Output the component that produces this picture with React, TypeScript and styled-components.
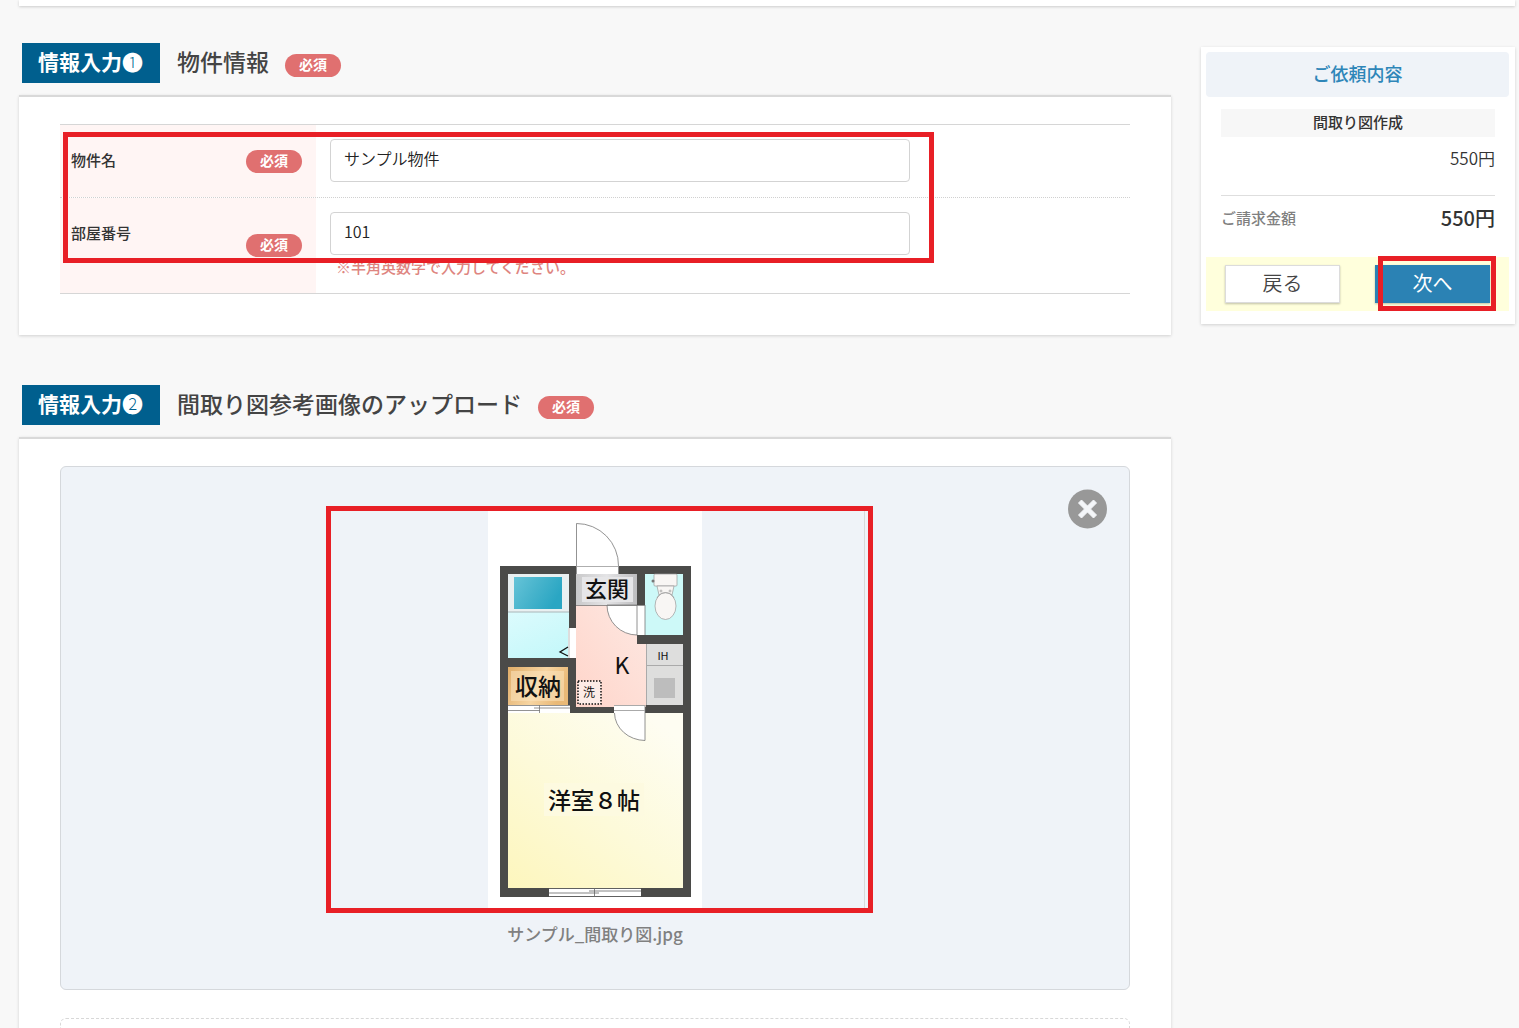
import React from "react";
import styled, { createGlobalStyle } from "styled-components";

const GlobalStyle = createGlobalStyle`
  *, *::before, *::after { box-sizing: border-box; }
  body {
    margin: 0;
    background: #f8f8f8;
    color: #333;
    font-family: "Noto Sans CJK JP", "Noto Sans", sans-serif;
    font-size: 15px;
  }
  h2, h3, p, dl, dt, dd, figure { margin: 0; }
  button, input { font-family: inherit; }
`;

const Page = styled.div`
  height: 100vh;
  overflow: hidden;
  padding: 0 4px 0 19px;
`;

const TopPanel = styled.div`
  height: 6px;
  background: #fff;
  box-shadow: 0 1px 3px rgba(0, 0, 0, 0.18);
`;

const Columns = styled.div`
  display: flex;
  align-items: flex-start;
  gap: 30px;
`;

const Main = styled.main`
  flex: 1;
  min-width: 0;
  padding-top: 37px;
`;

const Section = styled.section`
  margin-bottom: 50px;
`;

const SectionHeader = styled.header`
  display: flex;
  align-items: center;
  height: 40px;
  margin: 0 0 12px 3px;
`;

const Step = styled.span`
  height: 40px;
  padding: 0 17px 0 16px;
  background: #005f8e;
  color: #fff;
  font-size: 21px;
  font-weight: 700;
  line-height: 36px;
`;

const StepNumber = styled.span`
  font-weight: 300;
`;

const SectionTitle = styled.h2`
  height: 40px;
  margin: 0 16px 0 17px;
  color: #444;
  font-size: 23px;
  font-weight: 500;
  line-height: 36px;
`;

const Required = styled.span<{ $lowered?: boolean }>`
  flex: none;
  width: 56px;
  height: 23px;
  margin-top: ${(p) => (p.$lowered ? 4 : 0)}px;
  border-radius: 12px;
  background: #e07070;
  color: #fff;
  font-size: 14px;
  font-weight: 700;
  line-height: 20px;
  text-align: center;
`;

const Card = styled.div`
  padding: 27px 41px 41px;
  border-top: 2px solid #d9d9d9;
  background: #fff;
  box-shadow: 0 1px 3px rgba(0, 0, 0, 0.16);
`;

const Fields = styled.div`
  position: relative;
  border-top: 1px solid #d6d6d6;
  border-bottom: 1px solid #d6d6d6;
`;

const FieldRow = styled.div`
  display: grid;
  grid-template-columns: 256px 1fr;

  & + & {
    border-top: 1px dotted #d0d0d0;
  }
`;

const FieldHead = styled.div`
  display: flex;
  align-items: center;
  justify-content: space-between;
  padding: 0 14px 0 11px;
  background: #fff5f4;
`;

const FieldLabel = styled.label`
  align-self: flex-start;
  padding-top: 23px;
  color: #333;
  font-weight: 500;
  line-height: 24px;
`;

const FieldBody = styled.div`
  padding: 14px 14px 15px;
`;

const TextInput = styled.input`
  display: block;
  width: 580px;
  max-width: 100%;
  height: 43px;
  padding: 0 13px 5px;
  border: 1px solid #d3d3d3;
  border-radius: 4px;
  background: #fff;
  color: #222;
  font-size: 16px;
  font-weight: 350;
`;

const Hint = styled.p`
  margin: 2px 0 1px 6px;
  color: #de8580;
  font-weight: 500;
  line-height: 20px;
`;

const Highlight = styled.div<{ $top: number; $left: number; $w: number; $h: number }>`
  position: absolute;
  top: ${(p) => p.$top}px;
  left: ${(p) => p.$left}px;
  width: ${(p) => p.$w}px;
  height: ${(p) => p.$h}px;
  border: 5px solid #e81f26;
  pointer-events: none;
`;

const UploadBox = styled.div`
  position: relative;
  padding: 44px 0 43px;
  border: 1px solid #d5d8dc;
  border-radius: 6px;
  background: #eff3f8;
`;

const RemoveButton = styled.button`
  position: absolute;
  top: 22px;
  right: 22px;
  width: 40px;
  height: 40px;
  padding: 0;
  border: 0;
  background: none;
  cursor: pointer;

  svg { display: block; }
`;

const Preview = styled.div`
  position: relative;
  display: flex;
  justify-content: center;
  width: 540px;
  margin: 0 auto;
  border-right: 1px solid #d9d9d9;

  svg { display: block; }
`;

const FileName = styled.figcaption`
  margin-top: 14px;
  color: #808080;
  font-size: 17px;
  font-weight: 500;
  line-height: 24px;
  text-align: center;
`;

const DropArea = styled.div`
  height: 160px;
  margin-top: 28px;
  border: 1px dashed #d8d8d8;
  border-radius: 6px;
`;

const Side = styled.aside`
  flex: none;
  width: 314px;
  margin-top: 41px;
  padding: 5px 6px 13px 5px;
  background: #fff;
  box-shadow: 0 1px 3px rgba(0, 0, 0, 0.16);
`;

const SideTitle = styled.h2`
  border-radius: 4px;
  background: #eff3f8;
  color: #2e86b8;
  font-size: 18px;
  font-weight: 500;
  line-height: 42px;
  height: 45px;
  text-align: center;
`;

const Summary = styled.div`
  padding: 12px 14px 24px 15px;
`;

const ItemName = styled.h3`
  height: 28px;
  background: #f7f7f7;
  font-size: 15px;
  font-weight: 500;
  line-height: 26px;
  text-align: center;
`;

const ItemPrice = styled.p`
  padding: 7px 0 23px;
  border-bottom: 1px solid #dedede;
  font-size: 17px;
  font-weight: 350;
  line-height: 28px;
  text-align: right;
`;

const Total = styled.dl`
  display: flex;
  align-items: center;
  justify-content: space-between;
  padding: 8px 0 1px;
  line-height: 28px;

  dt { color: #808080; font-weight: 500; }
  dd { font-size: 20px; font-weight: 500; }
`;

const Actions = styled.div`
  position: relative;
  display: flex;
  justify-content: space-between;
  padding: 8px 19px;
  background: #ffffdc;
`;

const ActionButton = styled.button<{ $primary?: boolean }>`
  width: 115px;
  height: 38px;
  padding: 0 0 2px;
  border: 1px solid ${(p) => (p.$primary ? "#2b82b4" : "#dcdcdc")};
  background: ${(p) => (p.$primary ? "#2b82b4" : "#fff")};
  box-shadow: 0 1px 2px rgba(0, 0, 0, 0.25);
  color: ${(p) => (p.$primary ? "#fff" : "#444")};
  font-size: 20px;
  font-weight: ${(p) => (p.$primary ? 400 : 350)};
  line-height: 32px;
  cursor: pointer;
`;

const PlanText = styled.text`
  fill: #111;
  font-family: "Noto Sans CJK JP", sans-serif;
  text-anchor: middle;
`;

function FloorPlan() {
  const wall = "#4b4b49";
  return (
    <svg width="214" height="397" viewBox="8 11 214 397" role="img" aria-label="間取り図">
      <defs>
        <linearGradient id="tub" x1="0" y1="0" x2="1" y2="0.4">
          <stop offset="0" stopColor="#66c4d8" />
          <stop offset="0.5" stopColor="#48b4cc" />
          <stop offset="1" stopColor="#2aa6c3" />
        </linearGradient>
        <linearGradient id="bath" x1="0" y1="0" x2="0.6" y2="1">
          <stop offset="0" stopColor="#dcfbfd" />
          <stop offset="1" stopColor="#c6f8fa" />
        </linearGradient>
        <linearGradient id="closet" x1="0" y1="0" x2="1" y2="0.3">
          <stop offset="0" stopColor="#e0ad69" />
          <stop offset="0.6" stopColor="#f7d5a2" />
          <stop offset="1" stopColor="#e9b977" />
        </linearGradient>
        <linearGradient id="hall" x1="0" y1="0" x2="1" y2="0">
          <stop offset="0" stopColor="#c9c9ca" />
          <stop offset="0.5" stopColor="#e4e4e6" />
          <stop offset="1" stopColor="#bdbdbf" />
        </linearGradient>
        <linearGradient id="kitchen" x1="0" y1="1" x2="1" y2="0">
          <stop offset="0" stopColor="#ffd5ca" />
          <stop offset="1" stopColor="#fde8e2" />
        </linearGradient>
        <linearGradient id="room" x1="0" y1="1" x2="0.8" y2="0">
          <stop offset="0" stopColor="#fdf6bd" />
          <stop offset="0.5" stopColor="#fdfad9" />
          <stop offset="1" stopColor="#fefdf2" />
        </linearGradient>
      </defs>
      <rect x="8" y="11" width="214" height="397" fill="#fff" />
      <rect x="20" y="66" width="191" height="331" fill={wall} />

      <rect x="28" y="74" width="61" height="38" fill="#e9f0f1" />
      <rect x="34" y="77" width="48" height="32" fill="url(#tub)" />
      <rect x="28" y="112" width="61" height="46" fill="url(#bath)" />
      <path d="M28 112H89" stroke="#a9b6b8" />
      <rect x="88" y="128" width="8" height="30" fill="#fff" />
      <path d="M89 128V158" stroke="#bbb" />

      <rect x="28" y="167" width="60" height="38" fill="url(#closet)" />
      <rect x="31" y="171" width="53" height="30" fill="#fbe3bd" opacity="0.55" />
      <rect x="28" y="205" width="62" height="8" fill="#fff" />
      <path d="M28 205.500H90M28 210.500H60M54 208H90M59.500 205V213" stroke="#777" strokeWidth="0.8" />

      <rect x="96" y="66" width="43" height="8" fill="#fff" />
      <path d="M96.500 74V23.500A42 42 0 0 1 138.500 66V74" fill="#fff" stroke="#777" strokeWidth="0.8" />
      <path d="M96 66.500H139" stroke="#999" strokeWidth="0.8" />
      <rect x="96" y="74" width="61" height="31" fill="url(#hall)" />
      <rect x="102" y="77" width="51" height="25" fill="#e6e6e8" />

      <rect x="96" y="105" width="70" height="102" fill="url(#kitchen)" />
      <rect x="165" y="74" width="38" height="61" fill="#cdf9f8" />
      <rect x="157" y="105" width="8" height="30" fill="#fff" />
      <path d="M127 105A30 30 0 0 0 157 135V105Z" fill="#fff" stroke="#777" strokeWidth="0.8" />
      <path d="M96 105.500H165M165 105V135" stroke="#777" strokeWidth="0.8" />
      <rect x="157" y="135" width="54" height="9" fill={wall} />

      <g fill="#f8f6f4" stroke="#999" strokeWidth="0.7">
        <rect x="174" y="74" width="23" height="12" rx="1" />
        <path d="M177 86H194L192 95H179Z" />
        <ellipse cx="185.500" cy="106" rx="10.500" ry="13.500" />
        <path d="M177 98C180 91 191 91 194 98" fill="none" />
        <circle cx="181" cy="91" r="1" />
        <circle cx="190" cy="91" r="1" />
      </g>
      <circle cx="173" cy="81" r="1.500" fill="#777" />

      <rect x="166" y="144" width="37" height="61" fill="#dededd" />
      <path d="M166 165.500H203M166.500 144V205" fill="none" stroke="#aaa" />
      <rect x="174" y="178" width="21" height="20" fill="#bdbdbd" />

      <rect x="134" y="205" width="31" height="8" fill="#fff" />
      <rect x="28" y="213" width="175" height="175" fill="url(#room)" />
      <path d="M134.500 213A31 28 0 0 0 165 240.500V205" fill="#fff" stroke="#777" strokeWidth="0.8" />
      <path d="M134 205.500H165M134 210.500H165" stroke="#aaa" />

      <rect x="69" y="389" width="92" height="7" fill="#fff" />
      <path d="M69 388.500H161M69 396.500H161M69 393H119M109 391H161M114.500 388V397" stroke="#666" strokeWidth="0.8" />

      <rect x="98" y="181" width="23" height="23" fill="#fdece7" stroke="#111" strokeWidth="1.500" strokeDasharray="1.500 1.500" />
      <path d="M88 147L80 152L88 156" fill="none" stroke="#111" strokeWidth="1.300" />

      <rect x="64" y="283" width="100" height="33" fill="#fdfae0" />
      <PlanText x="127" y="97" fontSize="22" fontWeight="500">玄関</PlanText>
      <PlanText x="58" y="195" fontSize="23" fontWeight="500">収納</PlanText>
      <PlanText x="142" y="174" fontSize="23">K</PlanText>
      <PlanText x="183" y="160" fontSize="11">IH</PlanText>
      <PlanText x="109" y="197" fontSize="12">洗</PlanText>
      <PlanText x="114" y="309" fontSize="23" fontWeight="500">洋室８帖</PlanText>
    </svg>
  );
}

function RemoveIcon() {
  return (
    <svg width="40" height="40" viewBox="0 0 40 40" aria-hidden="true">
      <circle cx="20.500" cy="20" r="19.500" fill="#989898" />
      <path
        d="M14.500 11L20.500 17L26.500 11L29.500 14L23.500 20L29.500 26L26.500 29L20.500 23L14.500 29L11.500 26L17.500 20L11.500 14Z"
        fill="#f4f6f9"
        stroke="#f4f6f9"
        strokeLinejoin="round"
      />
    </svg>
  );
}

function Heading({ mark, title }: { mark: string; title: string }) {
  return (
    <SectionHeader>
      <Step>
        情報入力<StepNumber>{mark}</StepNumber>
      </Step>
      <SectionTitle>{title}</SectionTitle>
      <Required $lowered>必須</Required>
    </SectionHeader>
  );
}

interface FieldProps {
  id: string;
  label: string;
  value: string;
  hint?: string;
}

function Field({ id, label, value, hint }: FieldProps) {
  return (
    <FieldRow>
      <FieldHead>
        <FieldLabel htmlFor={id}>{label}</FieldLabel>
        <Required>必須</Required>
      </FieldHead>
      <FieldBody>
        <TextInput id={id} type="text" defaultValue={value} />
        {hint && <Hint>{hint}</Hint>}
      </FieldBody>
    </FieldRow>
  );
}

export default function App() {
  return (
    <>
      <GlobalStyle />
      <Page>
        <TopPanel />
        <Columns>
          <Main>
            <Section>
              <Heading mark="❶" title="物件情報" />
              <Card>
                <Fields>
                  <Field id="property-name" label="物件名" value="サンプル物件" />
                  <Field id="room-number" label="部屋番号" value="101" hint="※半角英数字で入力してください。" />
                  <Highlight $top={7} $left={3} $w={871} $h={131} />
                </Fields>
              </Card>
            </Section>
            <Section>
              <Heading mark="❷" title="間取り図参考画像のアップロード" />
              <Card>
                <UploadBox>
                  <figure>
                    <Preview>
                      <FloorPlan />
                      <Highlight $top={-5} $left={1} $w={547} $h={407} />
                    </Preview>
                    <FileName>サンプル_間取り図.jpg</FileName>
                  </figure>
                  <RemoveButton type="button" aria-label="画像を削除">
                    <RemoveIcon />
                  </RemoveButton>
                </UploadBox>
                <DropArea />
              </Card>
            </Section>
          </Main>
          <Side>
            <SideTitle>ご依頼内容</SideTitle>
            <Summary>
              <ItemName>間取り図作成</ItemName>
              <ItemPrice>550円</ItemPrice>
              <Total>
                <dt>ご請求金額</dt>
                <dd>550円</dd>
              </Total>
            </Summary>
            <Actions>
              <ActionButton type="button">戻る</ActionButton>
              <ActionButton type="button" $primary>次へ</ActionButton>
              <Highlight $top={-1} $left={172} $w={118} $h={55} />
            </Actions>
          </Side>
        </Columns>
      </Page>
    </>
  );
}
